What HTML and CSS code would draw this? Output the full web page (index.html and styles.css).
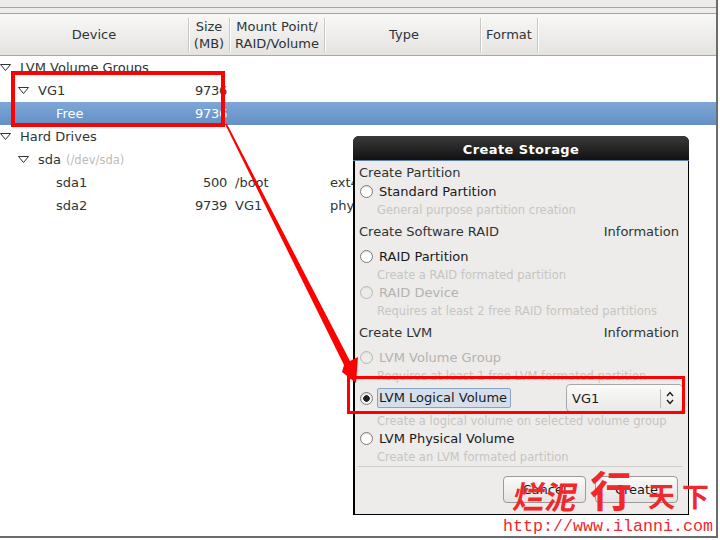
FILE: index.html
```html
<!DOCTYPE html>
<html lang="en">
<head>
    <meta charset="UTF-8">
    <meta name="viewport" content="width=device-width, initial-scale=1.0">
    <title>Create Storage</title>
    <link rel="stylesheet" href="styles.css">
</head>
<body>
    <div class="screen">
        <div class="toolbar"></div>
        <div class="toolbar-gap"></div>

        <!-- Column headers -->
        <div class="head">
            <div class="col col-device">Device</div>
            <div class="col col-size">Size<br>(MB)</div>
            <div class="col col-mount">Mount Point/<br>RAID/Volume</div>
            <div class="col col-type">Type</div>
            <div class="col col-format">Format</div>
        </div>

        <!-- Device tree -->
        <div class="tree">
            <div class="row level-0">
                <span class="name"><svg class="caret" viewBox="0 0 11 7"><path d="M0.5 0.5H10.5L5.5 6.5Z"/></svg>LVM Volume Groups</span>
            </div>
            <div class="row level-1">
                <span class="name"><svg class="caret" viewBox="0 0 11 7"><path d="M0.5 0.5H10.5L5.5 6.5Z"/></svg>VG1</span>
                <span class="size">9736</span>
            </div>
            <div class="row level-2 selected">
                <span class="name">Free</span>
                <span class="size">9736</span>
            </div>
            <div class="row level-0">
                <span class="name"><svg class="caret" viewBox="0 0 11 7"><path d="M0.5 0.5H10.5L5.5 6.5Z"/></svg>Hard Drives</span>
            </div>
            <div class="row level-1">
                <span class="name"><svg class="caret" viewBox="0 0 11 7"><path d="M0.5 0.5H10.5L5.5 6.5Z"/></svg>sda <small class="path">(/dev/sda)</small></span>
            </div>
            <div class="row level-2">
                <span class="name">sda1</span>
                <span class="size">500</span>
                <span class="mount">/boot</span>
                <span class="type">ext4</span>
            </div>
            <div class="row level-2">
                <span class="name">sda2</span>
                <span class="size">9739</span>
                <span class="mount">VG1</span>
                <span class="type">physical volume (LVM)</span>
            </div>
        </div>

        <!-- Dialog -->
        <div class="dialog">
            <div class="dialog-title">Create Storage</div>
            <div class="dialog-body">
                <div class="section first"><span>Create Partition</span></div>
                <div class="option first-option"><span class="radio"></span><span>Standard Partition</span></div>
                <div class="desc gap-1">General purpose partition creation</div>

                <div class="section"><span>Create Software RAID</span><span>Information</span></div>
                <div class="option"><span class="radio"></span><span>RAID Partition</span></div>
                <div class="desc">Create a RAID formated partition</div>
                <div class="option off tight"><span class="radio"></span><span>RAID Device</span></div>
                <div class="desc gap-2">Requires at least 2 free RAID formated partitions</div>

                <div class="section"><span>Create LVM</span><span>Information</span></div>
                <div class="option off"><span class="radio"></span><span>LVM Volume Group</span></div>
                <div class="desc">Requires at least 1 free LVM formated partition</div>
                <div class="option picked">
                    <span class="radio on"></span>
                    <span class="focus">LVM Logical Volume</span>
                    <span class="combo">VG1<span class="arrows"><svg viewBox="0 0 8 14" width="8" height="14"><path d="M1 5L4 1.5L7 5M1 9L4 12.5L7 9" fill="none" stroke="#1a1a1a" stroke-width="1.4"/></svg></span></span>
                </div>
                <div class="desc gap-3">Create a logical volume on selected volume group</div>
                <div class="option tight"><span class="radio"></span><span>LVM Physical Volume</span></div>
                <div class="desc gap-2">Create an LVM formated partition</div>

                <div class="buttons">
                    <button class="btn">Cancel</button>
                    <button class="btn">Create</button>
                </div>
            </div>
        </div>

        <!-- Red annotations -->
        <div class="mark mark-tree"></div>
        <div class="mark mark-lvm"></div>
        <svg class="arrow" viewBox="0 0 720 540" width="720" height="540"><path d="M225 124L227 124L350 361L358 357L356 383L342 372L344 365Z" fill="#fe0000"/></svg>

        <div class="stamp">
            <span class="stamp-a">烂泥</span><span class="stamp-b">行</span><span class="stamp-c">天下</span>
        </div>
        <div class="url">http://www.ilanni.com</div>
    </div>
</body>
</html>
```

FILE: styles.css
```css
/* General */
* {
    box-sizing: border-box;
}

body {
    margin: 0;
    background-color: #fff;
    font-family: "DejaVu Sans", sans-serif;
    font-size: 13px;
    color: #2e3436;
}

.screen {
    position: relative;
    width: 718px;
    height: 538px;
    overflow: hidden;
    background-color: #fff;
    border-right: 2px solid #6c6c6c;
    border-bottom: 2px solid #6c6c6c;
}

/* Top strip */
.toolbar {
    height: 8px;
    background-color: #edecea;
    border-bottom: 1px solid #a5a4a1;
}

.toolbar-gap {
    height: 6px;
    background-color: #edecea;
    border-bottom: 1px solid #a5a4a1;
}

/* Column headers */
.head {
    display: flex;
    height: 42px;
    padding: 4px 0;
    background: linear-gradient(#f8f8f7, #e4e3e0);
    border-bottom: 1px solid #a9a8a5;
    line-height: 17px;
}

.col {
    display: flex;
    align-items: center;
    justify-content: center;
    height: 34px;
    border-right: 1px solid #c9c8c5;
    box-shadow: 1px 0 0 #fff;
    text-align: center;
}

.col-device {
    width: 189px;
    padding-bottom: 1px;
}

.col-size {
    width: 41px;
}

.col-mount {
    width: 95px;
}

.col-type {
    width: 156px;
    padding: 0 0 1px 3px;
}

.col-format {
    width: 57px;
    padding-bottom: 1px;
}

/* Tree */
.row {
    display: grid;
    grid-template-columns: 189px 38px 95px 1fr;
    align-items: center;
    height: 23px;
    white-space: nowrap;
}

.name {
    grid-column: 1;
    display: flex;
    align-items: center;
}

.level-1 .name {
    padding-left: 18px;
}

.level-2 .name {
    padding-left: 56px;
}

.caret {
    width: 11px;
    height: 7px;
    margin-right: 9px;
    fill: #fff;
    stroke: #2e3436;
    stroke-width: 1;
}

.path {
    margin-left: 5px;
    font-size: 11.5px;
    color: #bdbcb9;
}

.size {
    grid-column: 2;
    letter-spacing: -0.25px;
    text-align: right;
}

.mount {
    grid-column: 3;
    padding-left: 8px;
}

.type {
    grid-column: 4;
    padding-left: 8px;
}

.selected {
    background: linear-gradient(#7ea6d8, #6490c5);
    color: #fff;
}

/* Dialog */
.dialog {
    position: absolute;
    left: 353px;
    top: 136px;
    width: 336px;
    height: 379px;
    background-color: #000;
    border-radius: 6px 6px 0 0;
    padding: 0 1px 1px;
}

.dialog-title {
    height: 25px;
    margin: 0 -1px;
    background: linear-gradient(#3a3a3a, #111);
    border-bottom: 1px solid #5f7fa8;
    border-radius: 6px 6px 0 0;
    color: #fff;
    font-weight: bold;
    letter-spacing: 0.4px;
    line-height: 28px;
    text-align: center;
}

.dialog-body {
    height: 353px;
    margin-left: 1px;
    padding: 0 9px 0 4px;
    background-color: #edecea;
}

.section {
    display: flex;
    justify-content: space-between;
    align-items: center;
    height: 24px;
    padding-top: 1px;
}

.section.first {
    height: 21px;
}

.option {
    display: flex;
    align-items: center;
    gap: 6px;
    height: 23px;
    padding: 3px 0 0 1px;
    color: #1a1a1a;
}

.option.first-option {
    height: 18px;
    padding-top: 0;
}

.option.tight {
    height: 16px;
    padding-top: 0;
}

.option.off {
    color: #b4b3b0;
}

.option.picked {
    height: 24px;
    padding-top: 0;
}

.radio {
    width: 13px;
    height: 13px;
    flex: none;
    border: 1px solid #7d7c78;
    border-radius: 50%;
    background-color: #fff;
    box-shadow: inset 0 1px 1px #ddd;
}

.off .radio {
    border-color: #b9b8b5;
    background-color: #edecea;
}

.radio.on {
    margin-top: 2px;
    background: radial-gradient(circle, #222 0 3px, #f4f4f4 3.5px);
}

.desc {
    height: 18px;
    padding-left: 18px;
    font-size: 11.5px;
    line-height: 18px;
    color: #c6c5c2;
    white-space: nowrap;
}

.gap-1 {
    margin-top: 1px;
}

.gap-2 {
    margin-top: 2px;
}

.gap-3 {
    margin-top: 3px;
}

.focus {
    height: 20px;
    margin: 2px 0 0 -2px;
    padding: 0 3px 0 1px;
    background-color: #d5deeb;
    border: 1px solid #8aa5c4;
    border-radius: 2px;
    line-height: 18px;
}

.combo {
    display: flex;
    flex: none;
    align-items: center;
    justify-content: space-between;
    width: 117px;
    height: 28px;
    margin: 2px -4px 0 auto;
    padding: 0 5px;
    background: linear-gradient(#fbfbfa, #e9e8e6);
    border: 1px solid #a9a8a5;
    border-radius: 4px;
}

.arrows {
    display: flex;
    align-items: center;
    width: 17px;
    height: 19px;
    padding-left: 5px;
    border-left: 1px solid #bdbcb9;
}

.buttons {
    display: flex;
    justify-content: flex-end;
    gap: 9px;
    margin: 0 -4px 0 -2px;
    padding: 9px 5px 0 0;
    border-top: 1px solid #cfcecb;
}

.btn {
    width: 83px;
    height: 27px;
    padding: 0;
    background: linear-gradient(#fafaf9, #e5e4e2);
    border: 1px solid #9c9b98;
    border-radius: 4px;
    font-family: inherit;
    font-size: 13px;
    color: #1a1a1a;
}

/* Red annotations */
.mark {
    position: absolute;
    border: 3px solid #fe0000;
}

.mark-tree {
    left: 11px;
    top: 71px;
    width: 214px;
    height: 56px;
    border-width: 4px;
}

.mark-lvm {
    left: 347px;
    top: 376px;
    width: 338px;
    height: 38px;
}

.arrow {
    position: absolute;
    left: 0;
    top: 0;
}

/* Watermark */
.stamp {
    position: absolute;
    left: 514px;
    top: 466px;
    display: flex;
    align-items: flex-end;
    color: #f0282c;
    font-family: "Noto Sans CJK SC", sans-serif;
    font-weight: bold;
    white-space: nowrap;
}

.stamp-a {
    font-size: 32px;
    line-height: 38px;
    transform: skewX(-10deg);
}

.stamp-b {
    margin: 0 16px 2px 12px;
    font-size: 42px;
    line-height: 46px;
}

.stamp-c {
    font-size: 27px;
    line-height: 36px;
    letter-spacing: 7px;
}

.url {
    position: absolute;
    left: 503px;
    top: 517px;
    color: #f0282c;
    font-family: "Liberation Mono", monospace;
    font-size: 16.67px;
    line-height: 20px;
    white-space: nowrap;
}
```
